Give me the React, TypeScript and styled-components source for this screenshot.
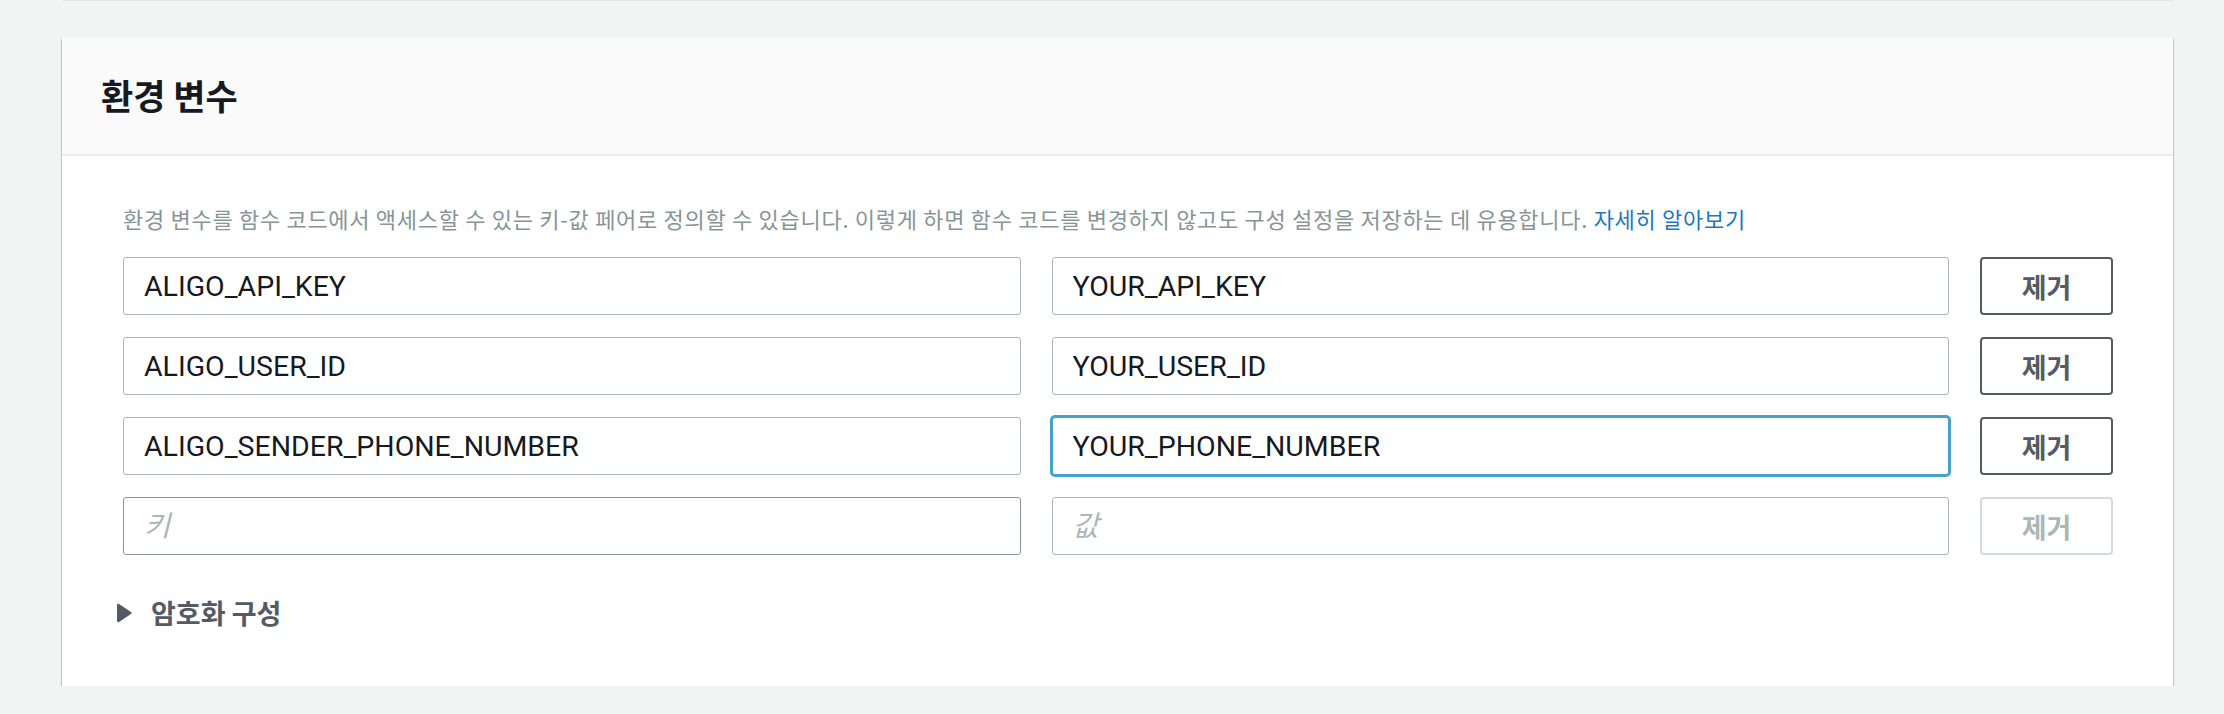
import React from 'react';
import styled, { createGlobalStyle, css } from 'styled-components';

const GlobalStyle = createGlobalStyle`
  body {
    margin: 0;
    background: #f2f3f3;
    font-family: 'Noto Sans CJK KR', 'Noto Sans', sans-serif;
  }
`;

const Page = styled.div`
  padding: 0 51px 0 62px;
`;

// bottom edge of the card above, just peeking in at the top
const PrevCardEdge = styled.div`
  height: 1px;
  background: #e3e6e6;
`;

const Card = styled.section`
  margin-top: 37px;
  background: #ffffff;
  box-shadow: 0 1px 1px 0 rgba(0, 28, 36, 0.3),
    1px 1px 1px 0 rgba(0, 28, 36, 0.15), -1px 1px 1px 0 rgba(0, 28, 36, 0.15);
`;

const CardHeader = styled.header`
  background: #fafafa;
  border-bottom: 2px solid #eaeded;
  padding: 37px 39px 39px;
`;

const Title = styled.h2`
  margin: 0;
  font-family: 'Noto Sans CJK KR', sans-serif;
  font-size: 35px;
  line-height: 40px;
  font-weight: 700;
  color: #16191f;
`;

const CardBody = styled.div`
  padding: 48px 60px 56px 61px;
`;

const Description = styled.p`
  margin: 0 0 25px;
  font-family: 'Noto Sans CJK KR', sans-serif;
  font-size: 22px;
  letter-spacing: 0.7px;
  line-height: 28px;
  color: #879596;
  white-space: nowrap;
`;

const LearnMore = styled.a`
  color: #1d78bd;
  text-decoration: none;
`;

const VarList = styled.div`
  display: flex;
  flex-direction: column;
  gap: 22px;
`;

const VarRow = styled.div`
  display: grid;
  grid-template-columns: 1fr 1fr 133px;
  column-gap: 31px;
`;

type Tone = 'normal' | 'strong' | 'focus';

const TextInput = styled.input<{ $tone?: Tone }>`
  box-sizing: border-box;
  width: 100%;
  height: 58px;
  padding: 0 20px;
  border: 1px solid #aab7b8;
  border-radius: 3px;
  background: #ffffff;
  font-family: Roboto, 'Noto Sans CJK KR', sans-serif;
  font-size: 28.5px;
  color: #16191f;
  outline: none;

  &::placeholder {
    color: #aab7b8;
    font-style: italic;
  }

  ${(p) =>
    p.$tone === 'strong' &&
    css`
      border-color: #879596;
    `}

  ${(p) =>
    p.$tone === 'focus' &&
    css`
      border-color: #44a3cb;
      box-shadow: 0 0 0 2px #44a3cb;
    `}
`;

const RemoveButton = styled.button`
  box-sizing: border-box;
  height: 58px;
  border: 2px solid #545b64;
  border-radius: 4px;
  background: #ffffff;
  font-family: 'Noto Sans CJK KR', sans-serif;
  font-size: 27px;
  font-weight: 700;
  color: #545b64;
  cursor: pointer;

  &:disabled {
    border-color: #d5dbdb;
    color: #aab7b8;
    cursor: default;
  }
`;

const Expander = styled.div`
  margin-top: 41px;
  display: flex;
  align-items: center;
  gap: 19px;
  cursor: pointer;
`;

const Caret = styled.svg`
  width: 16px;
  height: 20px;
  margin-left: -7px;
  flex: none;
`;

const ExpanderLabel = styled.span`
  font-family: 'Noto Sans CJK KR', sans-serif;
  font-size: 27px;
  line-height: 34px;
  font-weight: 700;
  color: #545b64;
`;

type EnvVar = {
  key: string;
  value: string;
  focus?: boolean;
};

const envVars: EnvVar[] = [
  { key: 'ALIGO_API_KEY', value: 'YOUR_API_KEY' },
  { key: 'ALIGO_USER_ID', value: 'YOUR_USER_ID' },
  { key: 'ALIGO_SENDER_PHONE_NUMBER', value: 'YOUR_PHONE_NUMBER', focus: true },
];

const App = () => {
  return (
    <>
      <GlobalStyle />
      <Page>
        <PrevCardEdge />
        <Card>
          <CardHeader>
            <Title>환경 변수</Title>
          </CardHeader>
          <CardBody>
            <Description>
              환경 변수를 함수 코드에서 액세스할 수 있는 키-값 페어로 정의할 수
              있습니다. 이렇게 하면 함수 코드를 변경하지 않고도 구성 설정을
              저장하는 데 유용합니다.{' '}
              <LearnMore href="#">자세히 알아보기</LearnMore>
            </Description>

            <VarList>
              {envVars.map((v) => (
                <VarRow key={v.key}>
                  <TextInput defaultValue={v.key} />
                  <TextInput
                    defaultValue={v.value}
                    $tone={v.focus ? 'focus' : 'normal'}
                  />
                  <RemoveButton type="button">제거</RemoveButton>
                </VarRow>
              ))}
              <VarRow>
                <TextInput placeholder="키" $tone="strong" />
                <TextInput placeholder="값" />
                <RemoveButton type="button" disabled>
                  제거
                </RemoveButton>
              </VarRow>
            </VarList>

            <Expander>
              <Caret viewBox="0 0 16 20">
                <path
                  d="M1 2.2 C1 1 2 0.5 3 1.1 L15 9 C15.8 9.5 15.8 10.5 15 11 L3 18.9 C2 19.5 1 19 1 17.8 Z"
                  fill="#545b64"
                />
              </Caret>
              <ExpanderLabel>암호화 구성</ExpanderLabel>
            </Expander>
          </CardBody>
        </Card>
      </Page>
    </>
  );
};

export default App;
